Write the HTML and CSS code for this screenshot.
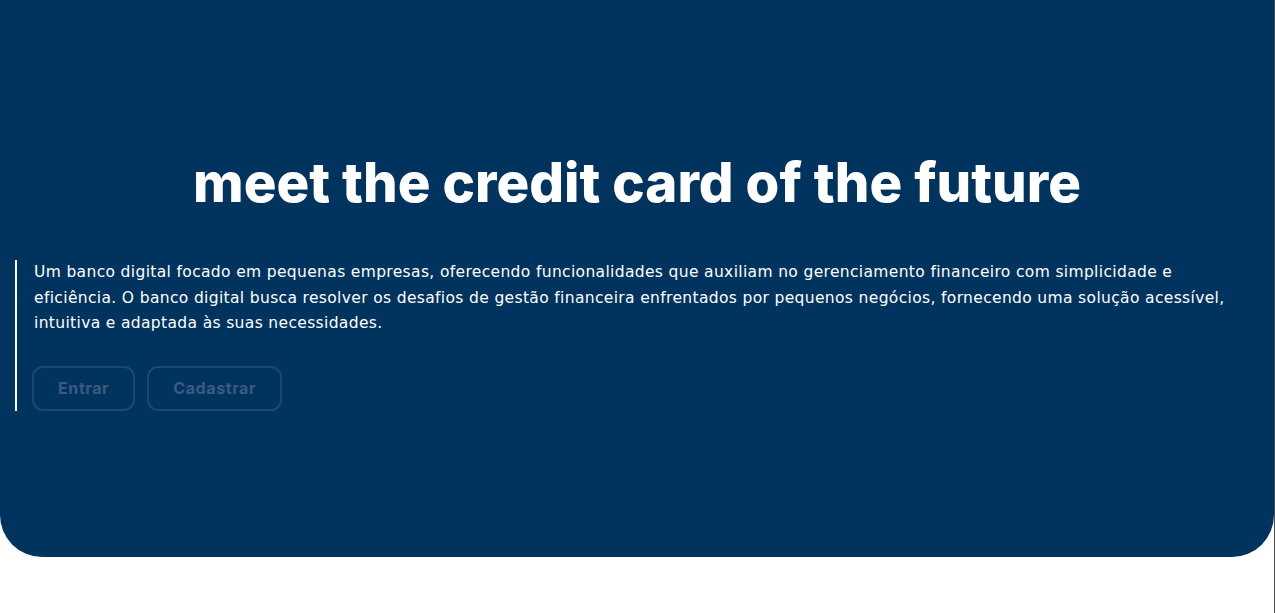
FILE: index.html
```html
<!DOCTYPE html>
<html lang="pt-BR">
<head>
<meta charset="utf-8">
<title>meet the credit card of the future</title>
<link rel="stylesheet" href="styles.css">
</head>
<body>
<section class="hero">
  <h1 class="hero-title">meet the credit card of the future</h1>
  <div class="intro">
    <p class="intro-text">Um banco digital focado em pequenas empresas, oferecendo funcionalidades que auxiliam no gerenciamento financeiro com simplicidade e eficiência. O banco digital busca resolver os desafios de gestão financeira enfrentados por pequenos negócios, fornecendo uma solução acessível, intuitiva e adaptada às suas necessidades.</p>
    <div class="actions">
      <button class="btn">Entrar</button>
      <button class="btn">Cadastrar</button>
    </div>
  </div>
</section>
</body>
</html>
```

FILE: styles.css
```css
html, body {
  margin: 0;
  padding: 0;
  background: #ffffff;
}
body {
  min-height: 613px;
  border-right: 1px solid #4a4a4a;
  box-sizing: border-box;
  font-family: "Inter", "DejaVu Sans", sans-serif;
}
.hero {
  background: #00335e;
  height: 557px;
  box-sizing: border-box;
  padding-top: 148px;
  border-radius: 0 0 42px 42px;
}
.hero-title {
  margin: 0;
  text-align: center;
  color: #ffffff;
  font-family: "Inter", sans-serif;
  font-size: 54.6px;
  line-height: 68px;
  font-weight: 800;
}
.intro {
  margin: 44px 0 0 15px;
  border-left: 2px solid #ffffff;
  padding: 0 40px 0 15px;
}
.intro-text {
  margin: 0;
  padding-left: 2px;
  color: #ffffff;
  font-family: "DejaVu Sans", sans-serif;
  font-size: 15.5px;
  letter-spacing: 0.35px;
  line-height: 25.5px;
}
.actions {
  display: flex;
  gap: 12px;
  margin-top: 29px;
}
.btn {
  height: 45px;
  box-sizing: border-box;
  padding: 0 24px;
  background: transparent;
  border: 2px solid #1f4670;
  border-radius: 11px;
  color: #3a5b80;
  font-family: "Inter", sans-serif;
  font-weight: 700;
  font-size: 16px;
  letter-spacing: 0.6px;
}
```
